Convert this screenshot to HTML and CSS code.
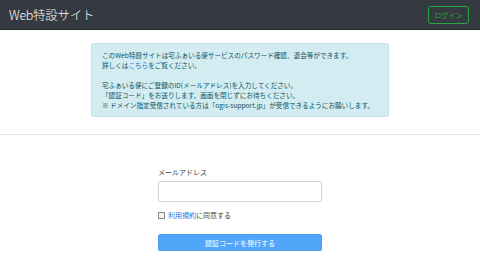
FILE: index.html
```html
<!DOCTYPE html>
<html lang="ja">
<head>
    <meta charset="UTF-8">
    <meta name="viewport" content="width=device-width, initial-scale=1.0">
    <title>Web特設サイト</title>
    <link rel="stylesheet" href="styles.css">
</head>
<body>
    <header class="navbar">
        <div class="brand">Web特設サイト</div>
        <div class="loginBtn">ログイン</div>
    </header>
    <div class="alert">
        <p>このWeb特設サイトは宅ふぁいる便サービスのパスワード確認、退会等ができます。<br>詳しくは<a href="#">こちら</a>をご覧ください。</p>
        <p>宅ふぁいる便にご登録のID(メールアドレス)を入力してください。<br>「認証コード」をお送りします。画面を閉じずにお待ちください。<br>※ ドメイン指定受信されている方は「ogis-support.jp」が受信できるようにお願いします。</p>
    </div>
    <hr class="divider">
    <form class="form">
        <label class="label">メールアドレス</label>
        <input class="input" type="text">
        <div class="agree">
            <span class="check"></span>
            <span><a href="#">利用規約</a>に同意する</span>
        </div>
        <div class="submit">認証コードを発行する</div>
    </form>
</body>
</html>
```

FILE: styles.css
```css
:root{
    --navBg: #343a40;
    --green: #28a745;
    --link: #1a73d9;
    --infoBg: #d3ecf1;
    --infoBorder: #bee5eb;
    --infoText: #0c5460;
}
*{
    box-sizing: border-box;
}
body{
    margin: 0;
    background: #ffffff;
    font-family: "Noto Sans CJK JP", "Noto Sans", sans-serif;
    color: #333333;
}
a{
    color: var(--link);
    text-decoration: none;
}
.navbar{
    display: flex;
    align-items: center;
    justify-content: space-between;
    height: 30px;
    padding: 0 11px 0 9px;
    background: var(--navBg);
    border-bottom: 1px solid #23272b;
}
.brand{
    color: #ffffff;
    font-size: 12.5px;
    font-weight: 300;
    letter-spacing: -0.3px;
}
.loginBtn{
    display: flex;
    align-items: center;
    justify-content: center;
    width: 41px;
    height: 18px;
    margin-top: 1px;
    border: 1px solid var(--green);
    border-radius: 3px;
    color: var(--green);
    font-size: 7px;
}
.alert{
    width: 298px;
    margin: 13px auto 0;
    padding: 6px 10px;
    background: var(--infoBg);
    border: 1px solid var(--infoBorder);
    border-radius: 3px;
    color: var(--infoText);
    font-size: 6.6px;
    line-height: 10px;
}
.alert p{
    margin: 0;
}
.alert p + p{
    margin-top: 10px;
}
.divider{
    margin: 17px 0 0;
    border: 0;
    border-top: 1px solid #e2e4e6;
}
.form{
    display: flex;
    flex-direction: column;
    width: 164px;
    margin: 32px auto 0;
}
.label{
    font-size: 7px;
    line-height: 10px;
    color: #444444;
}
.input{
    height: 21px;
    margin-top: 4px;
    border: 1px solid #ced4da;
    border-radius: 2px;
    background: #ffffff;
}
.agree{
    display: flex;
    align-items: center;
    gap: 3px;
    margin-top: 8px;
    font-size: 7px;
    line-height: 10px;
    color: #444444;
}
.check{
    width: 7px;
    height: 7px;
    border: 1px solid #8a8a8a;
    background: #f2f2f2;
}
.submit{
    display: flex;
    align-items: center;
    justify-content: center;
    height: 17px;
    margin-top: 14px;
    background: #52a6fa;
    border: 1px solid #4a9ef0;
    border-radius: 2px;
    color: #ffffff;
    font-size: 7px;
}
```
